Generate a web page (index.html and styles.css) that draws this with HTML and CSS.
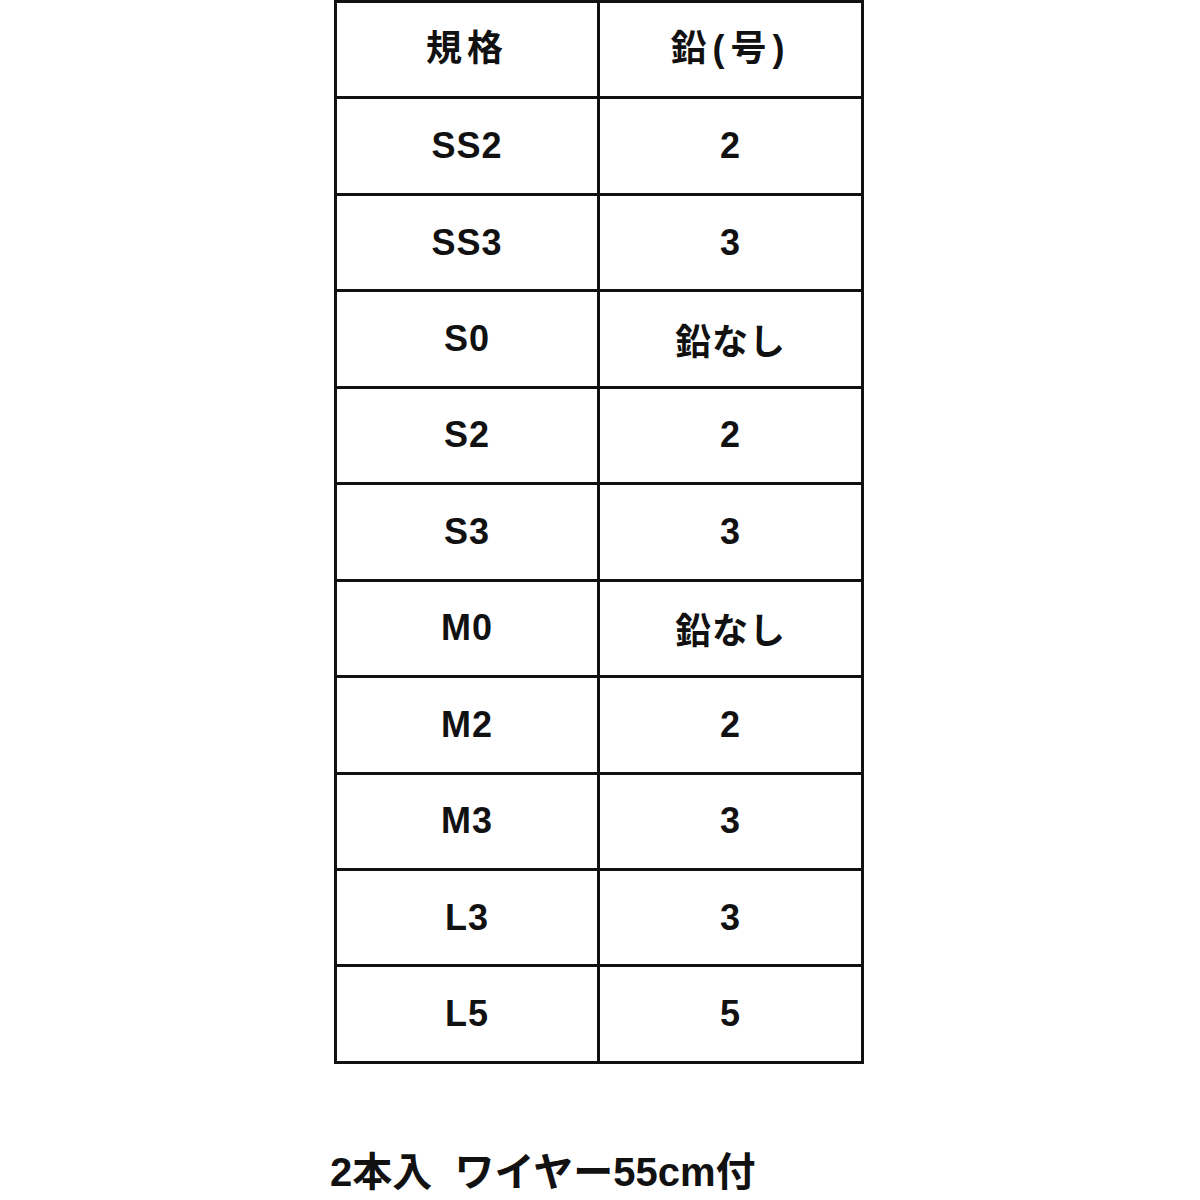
FILE: index.html
```html
<!DOCTYPE html>
<html lang="ja">
<head>
<meta charset="utf-8">
<link rel="stylesheet" href="styles.css">
</head>
<body>
<div class="spec">
  <div class="cell head">規格</div><div class="cell head lead">鉛(号)</div>
  <div class="cell">SS2</div><div class="cell">2</div>
  <div class="cell">SS3</div><div class="cell">3</div>
  <div class="cell">S0</div><div class="cell">鉛なし</div>
  <div class="cell">S2</div><div class="cell">2</div>
  <div class="cell">S3</div><div class="cell">3</div>
  <div class="cell">M0</div><div class="cell">鉛なし</div>
  <div class="cell">M2</div><div class="cell">2</div>
  <div class="cell">M3</div><div class="cell">3</div>
  <div class="cell">L3</div><div class="cell">3</div>
  <div class="cell">L5</div><div class="cell">5</div>
</div>
<p class="caption">2本入&nbsp; ワイヤー55cm付</p>
</body>
</html>
```

FILE: styles.css
```css
html, body {
  margin: 0;
  padding: 0;
  background: #fff;
}
body {
  width: 1200px;
  height: 1200px;
  overflow: hidden;
  font-family: "Liberation Sans", "Noto Sans CJK JP", sans-serif;
  font-weight: bold;
  color: #111;
}
.spec {
  margin-left: 334px;
  width: 530px;
  box-sizing: border-box;
  display: grid;
  grid-template-columns: 260px 261px;
  grid-auto-rows: 93.45px;
  gap: 3px;
  padding: 3px;
  background: #111;
}
.cell {
  background: #fff;
  display: flex;
  align-items: center;
  justify-content: center;
  font-size: 36px;
  letter-spacing: 1px;
}
.head {
  padding-bottom: 10px;
  letter-spacing: 5px;
}
.lead {
  letter-spacing: 6px;
}
.caption {
  margin: 86px 0 0 330px;
  font-size: 40px;
  line-height: 44px;
  letter-spacing: 0;
}
```
